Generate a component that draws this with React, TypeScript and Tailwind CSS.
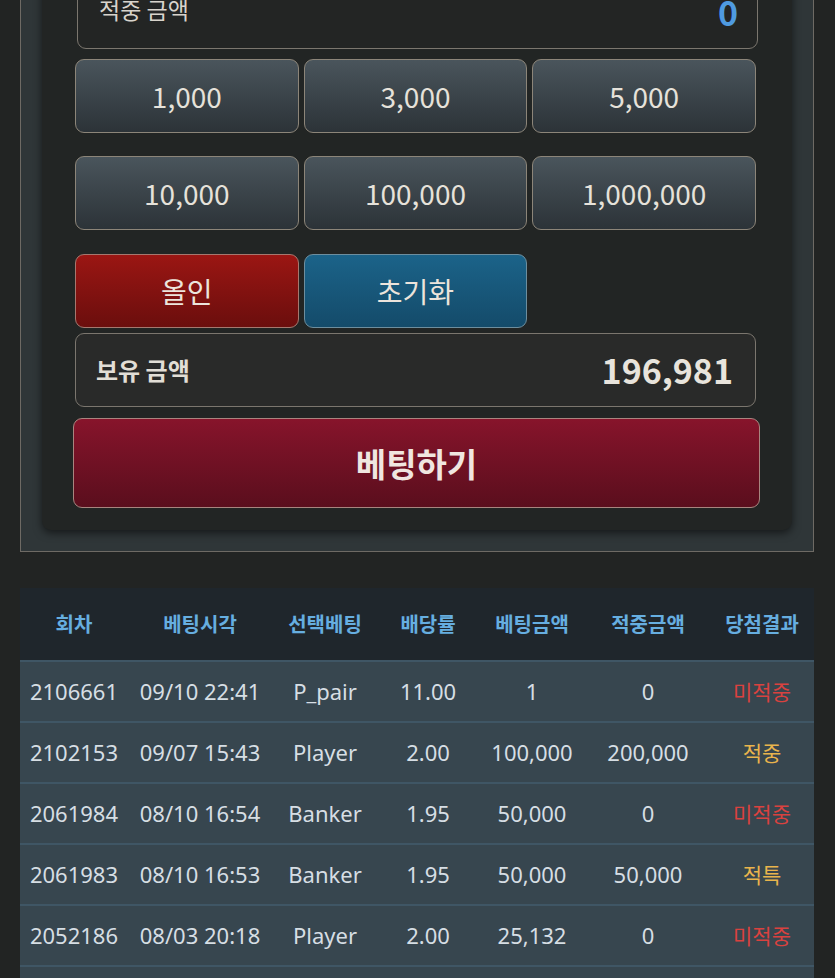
import React from "react";

const amounts = ["1,000", "3,000", "5,000", "10,000", "100,000", "1,000,000"];

type Row = {
  round: string;
  time: string;
  pick: string;
  odds: string;
  bet: string;
  win: string;
  result: string;
  tone: "lose" | "win";
};

const rows: Row[] = [
  { round: "2106661", time: "09/10 22:41", pick: "P_pair", odds: "11.00", bet: "1", win: "0", result: "미적중", tone: "lose" },
  { round: "2102153", time: "09/07 15:43", pick: "Player", odds: "2.00", bet: "100,000", win: "200,000", result: "적중", tone: "win" },
  { round: "2061984", time: "08/10 16:54", pick: "Banker", odds: "1.95", bet: "50,000", win: "0", result: "미적중", tone: "lose" },
  { round: "2061983", time: "08/10 16:53", pick: "Banker", odds: "1.95", bet: "50,000", win: "50,000", result: "적특", tone: "win" },
  { round: "2052186", time: "08/03 20:18", pick: "Player", odds: "2.00", bet: "25,132", win: "0", result: "미적중", tone: "lose" },
];

const headers = ["회차", "베팅시각", "선택베팅", "배당률", "베팅금액", "적중금액", "당첨결과"];

const cols = "grid grid-cols-[108px_144px_106px_100px_108px_124px_104px]";

export default function App() {
  return (
    <div className="min-h-screen overflow-hidden bg-[#222423] pl-[20px] pr-[21px] font-['Noto_Sans_CJK_KR',sans-serif]">
      <div className="-mt-[76px] border border-[#6e6a64] bg-[#2f3638] px-[21px] pt-[22px] pb-[21px]">
        <div className="rounded-[9px] bg-[#222524] pl-[33px] pr-[36px] pt-[22px] pb-[22px] shadow-[0_3px_8px_rgba(0,0,0,0.55)]">
          {/* 적중 금액 */}
          <div className="-mr-[2px] ml-[2px] flex h-[80px] items-center justify-between rounded-[9px] border-[1.5px] border-[#7b766e] bg-[#232524] pl-[21px] pr-[19px]">
            <span className="text-[23px] leading-none text-[#d8d4cc]">적중 금액</span>
            <span className="mt-[6px] text-[34px] font-bold leading-none text-[#4f9be0]">0</span>
          </div>

          {/* amount buttons */}
          <div className="mt-[10px] grid grid-cols-3 gap-x-[5px] gap-y-[23px]">
            {amounts.map((a) => (
              <button
                key={a}
                className="flex h-[74px] items-center justify-center rounded-[9px] border-[1.5px] border-[#8c8579] bg-gradient-to-b from-[#4a555c] to-[#2c3338] text-[28px] leading-none text-[#e6e2da]"
              >
                {a}
              </button>
            ))}
          </div>

          <div className="mt-[24px] grid grid-cols-3 gap-x-[5px]">
            <button className="flex h-[74px] items-center justify-center rounded-[9px] border-[1.5px] border-[#a5786f] bg-gradient-to-b from-[#9b1613] to-[#6b0e0d] text-[28px] leading-none text-[#ece4dc]">
              올인
            </button>
            <button className="flex h-[74px] items-center justify-center rounded-[9px] border-[1.5px] border-[#6d8e9e] bg-gradient-to-b from-[#1b6389] to-[#144b6a] text-[28px] leading-none text-[#ece4dc]">
              초기화
            </button>
          </div>

          {/* 보유 금액 */}
          <div className="mt-[5px] flex h-[74px] items-center justify-between rounded-[9px] border-[1.5px] border-[#7b766e] bg-[#292a29] pl-[20px] pr-[22px]">
            <span className="text-[24px] font-bold leading-none text-[#e2ded6]">보유 금액</span>
            <span className="text-[34px] font-bold leading-none text-[#e8e4dc]">196,981</span>
          </div>

          {/* 베팅하기 */}
          <button className="-ml-[2px] mt-[11px] flex h-[90px] w-[calc(100%+6px)] items-center justify-center rounded-[9px] border-[1.5px] border-[#a8857f] bg-gradient-to-b from-[#87142b] to-[#5a0e1d] text-[33px] font-bold leading-none text-[#f0e6e0]">
            베팅하기
          </button>
        </div>
      </div>

      {/* history table */}
      <div className="mt-[36px] font-['Noto_Sans','Noto_Sans_CJK_KR',sans-serif]">
        <div className={`${cols} h-[72px] items-center bg-[#1f262c]`}>
          {headers.map((h) => (
            <div key={h} className="text-center font-['Noto_Sans_CJK_KR',sans-serif] text-[20px] font-bold text-[#66aee0]">
              {h}
            </div>
          ))}
        </div>
        {rows.map((r) => (
          <div key={r.round} className={`${cols} h-[61px] items-center border-t-2 border-[#3f5665] bg-[#37464f] text-[22px] text-[#d6dee4]`}>
            <div className="text-center">{r.round}</div>
            <div className="text-center">{r.time}</div>
            <div className="text-center">{r.pick}</div>
            <div className="text-center">{r.odds}</div>
            <div className="text-center">{r.bet}</div>
            <div className="text-center">{r.win}</div>
            <div
              className={`text-center font-['Noto_Sans_CJK_KR',sans-serif] text-[21px] ${
                r.tone === "lose" ? "text-[#d9423f]" : "text-[#e9b44c]"
              }`}
            >
              {r.result}
            </div>
          </div>
        ))}
        <div className="h-[61px] border-t-2 border-[#3f5665] bg-[#37464f]" />
      </div>
    </div>
  );
}
